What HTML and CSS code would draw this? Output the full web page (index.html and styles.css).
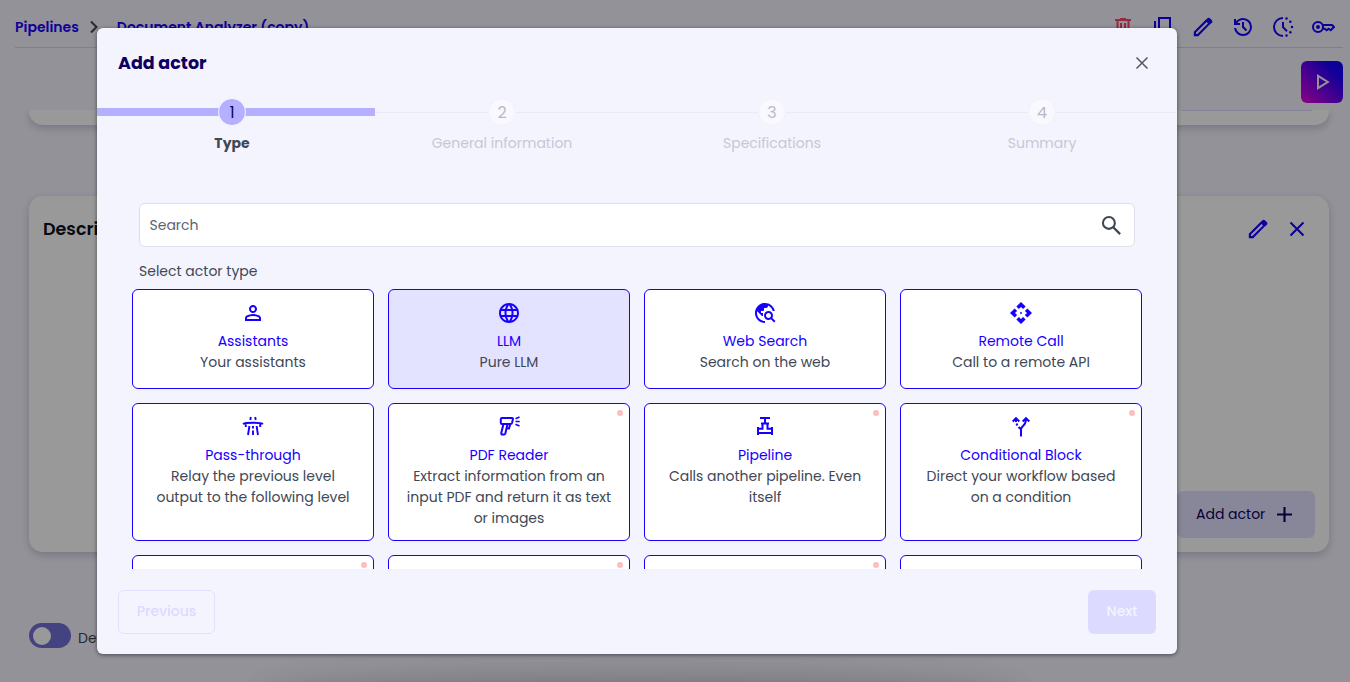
FILE: index.html
```html
<!DOCTYPE html>
<html lang="en">
<head>
<meta charset="utf-8">
<title>Add actor</title>
<link rel="stylesheet" href="styles.css">
</head>
<body>
<svg class="sprite" aria-hidden="true">
  <symbol id="pencil" viewBox="0 0 24 24"><path d="M5 19h1.400l10.600-10.600-1.400-1.400L5 17.600V19ZM18.200 10 7.250 21.200H2.800v-4.450L14 5.600l2.200-2.200q.7-.7 1.500-.7t1.500.7l1.500 1.500q.7.7.7 1.500t-.7 1.500Z"/></symbol>
  <symbol id="close" viewBox="0 0 24 24"><path d="M5.500 5.500l13 13M18.500 5.500l-13 13" fill="none" stroke="currentColor" stroke-width="2"/></symbol>
</svg>
<div class="page">
  <header class="topbar">
    <nav class="crumbs">
      <span>Pipelines</span>
      <svg class="chevron" viewBox="0 0 10 14"><path d="M2 1.500l5.500 5.500L2 12.500" fill="none" stroke="currentColor" stroke-width="2"/></svg>
      <span class="crumb-name">Document Analyzer (copy)</span>
    </nav>
    <div class="tools">
      <svg class="icon danger" viewBox="0 0 24 24"><path d="M4 5h16M9 4h6M6.500 5v15h11V5M10 8v9M14 8v9" fill="none" stroke="currentColor" stroke-width="2"/></svg>
      <svg class="icon" viewBox="0 0 24 24"><path d="M8 3h11v14H8zM4 6v15H16" fill="none" stroke="currentColor" stroke-width="2"/></svg>
      <svg class="icon"><use href="#pencil"/></svg>
      <svg class="icon" viewBox="0 0 24 24"><path d="M12 21q-3.450 0-6.012-2.287Q3.425 16.425 3.050 13H5.100q.35 2.600 2.313 4.300Q9.375 19 12 19q2.925 0 4.963-2.038Q19 14.925 19 12t-2.037-4.963Q14.925 5 12 5q-1.725 0-3.225.8T6.250 8H9v2H3V4h2v2.350q1.275-1.600 3.113-2.475T12 3q3.800 0 6.400 2.600T21 12t-2.600 6.400T12 21Zm2.800-4.800L11 12.400V7h2v4.600l3.200 3.200Z"/></svg>
      <svg class="icon" viewBox="0 0 24 24"><path d="M12 3a9 9 0 0 0 0 18M12 7v5.200l4 4" fill="none" stroke="currentColor" stroke-width="2"/><g><circle cx="15.500" cy="3.500" r="1.250"/><circle cx="19.300" cy="6.800" r="1.250"/><circle cx="21" cy="12" r="1.250"/><circle cx="19.300" cy="17.200" r="1.250"/><circle cx="15.500" cy="20.500" r="1.250"/></g></svg>
      <svg class="icon" viewBox="0 0 24 24"><circle cx="7" cy="12" r="5" fill="none" stroke="currentColor" stroke-width="2"/><circle cx="7" cy="12" r="2"/><path d="M11.500 10h9.500l2 2-3.300 3.300-2-1.500-2 1.500-2-1.500h-2.200" fill="none" stroke="currentColor" stroke-width="2"/></svg>
    </div>
  </header>
  <div class="runbar">
    <button class="run"><svg class="icon" viewBox="0 0 24 24"><path d="M8 5.800v12.400l9.800-6.200z" fill="none" stroke="currentColor" stroke-width="2"/></svg></button>
  </div>
  <div class="panel panel-end"><div class="panel-rule"></div></div>
  <section class="panel panel-main">
    <div class="panel-head">
      <h2>Description</h2>
      <div class="panel-tools"><svg class="icon"><use href="#pencil"/></svg><svg class="icon"><use href="#close"/></svg></div>
    </div>
    <button class="add">Add actor <svg viewBox="0 0 14 14"><path d="M7 0v14M0 7h14" stroke="currentColor" stroke-width="2"/></svg></button>
  </section>
  <div class="toggle-row"><span class="toggle"><span class="knob"></span></span><span class="toggle-text">Debug</span></div>
</div>
<div class="bottom-shade"></div>
<div class="overlay">
  <div class="modal">
    <div class="modal-head">
      <h1>Add actor</h1>
      <svg class="modal-close" viewBox="0 0 14 14"><path d="M1.500 1.500l11 11M12.500 1.500l-11 11" stroke="currentColor" stroke-width="1.500"/></svg>
    </div>
    <ol class="steps">
      <li class="step current"><span class="num">1</span><span class="label">Type</span></li>
      <li class="step"><span class="num">2</span><span class="label">General information</span></li>
      <li class="step"><span class="num">3</span><span class="label">Specifications</span></li>
      <li class="step"><span class="num">4</span><span class="label">Summary</span></li>
    </ol>
    <div class="search"><span>Search</span>
      <svg class="search-icon" viewBox="0 0 24 24"><circle cx="9.500" cy="9.500" r="5.700" fill="none" stroke="currentColor" stroke-width="2"/><path d="M13.700 13.700l6.600 6.600" stroke="currentColor" stroke-width="2.200"/></svg>
    </div>
    <p class="hint">Select actor type</p>
    <div class="list">
      <article class="card"><svg class="icon" viewBox="0 0 24 24"><path d="M12 12q-1.650 0-2.825-1.175T8 8t1.175-2.825T12 4t2.825 1.175T16 8t-1.175 2.825T12 12m-8 8v-2.800q0-.85.438-1.562T5.600 14.550q1.550-.775 3.150-1.162T12 13t3.250.388 3.150 1.162q.725.375 1.163 1.088T20 17.200V20zm2-2h12v-.8q0-.275-.137-.5t-.363-.35q-1.350-.675-2.725-1.012T12 15t-2.775.338T6.500 16.350q-.225.125-.363.350T6 17.200zm6-8q.825 0 1.413-.587T14 8t-.587-1.412T12 6t-1.412.588T10 8t.588 1.413T12 10"/></svg><h3>Assistants</h3><p>Your assistants</p></article>
      <article class="card selected"><svg class="icon" viewBox="0 0 24 24"><path d="M11.990 2C6.470 2 2 6.480 2 12s4.470 10 9.990 10C17.520 22 22 17.520 22 12S17.520 2 11.990 2zm6.930 6h-2.950c-.32-1.250-.78-2.450-1.380-3.560 1.840.63 3.370 1.910 4.330 3.560zM12 4.040c.83 1.200 1.480 2.530 1.910 3.960h-3.820c.43-1.430 1.080-2.760 1.910-3.960zM4.260 14C4.100 13.360 4 12.690 4 12s.1-1.360.26-2h3.380c-.08.66-.14 1.320-.14 2s.06 1.340.14 2H4.260zm.82 2h2.950c.32 1.250.78 2.450 1.380 3.560-1.840-.63-3.370-1.900-4.330-3.560zm2.950-8H5.080c.96-1.660 2.490-2.930 4.330-3.560C8.810 5.550 8.350 6.750 8.030 8zM12 19.960c-.83-1.200-1.480-2.530-1.910-3.960h3.820c-.43 1.430-1.080 2.760-1.910 3.960zM14.340 14H9.660c-.09-.66-.16-1.320-.16-2s.07-1.350.16-2h4.680c.09.65.16 1.320.16 2s-.07 1.340-.16 2zm.25 5.560c.6-1.110 1.060-2.310 1.380-3.560h2.950c-.96 1.650-2.490 2.930-4.330 3.560zM16.360 14c.08-.66.14-1.320.14-2s-.06-1.340-.14-2h3.380c.16.64.26 1.310.26 2s-.1 1.360-.26 2h-3.380z"/></svg><h3>LLM</h3><p>Pure LLM</p></article>
      <article class="card"><svg class="icon" viewBox="0 0 24 24"><path d="M19.300 16.900c.4-.7.7-1.500.7-2.400 0-2.500-2-4.500-4.500-4.500S11 12 11 14.500s2 4.500 4.500 4.500c.9 0 1.700-.3 2.400-.7l3.200 3.200 1.400-1.400-3.200-3.200zm-3.800.1c-1.400 0-2.500-1.100-2.500-2.500s1.100-2.500 2.500-2.500 2.500 1.100 2.500 2.500-1.100 2.500-2.500 2.500zM12 20v2C6.480 22 2 17.520 2 12S6.480 2 12 2c4.840 0 8.870 3.440 9.800 8h-2.070c-.64-2.460-2.400-4.470-4.730-5.410V5c0 1.100-.9 2-2 2h-2v2c0 .55-.45 1-1 1H8v2h2v3H9l-4.790-4.790C4.080 10.790 4 11.380 4 12c0 4.410 3.590 8 8 8z"/></svg><h3>Web Search</h3><p>Search on the web</p></article>
      <article class="card"><svg class="icon" viewBox="0 0 24 24"><path d="M13.200 12L12 13.200 10.800 12 12 10.800zM12 6l2.120 2.120 2.500-2.500L12 1 7.380 5.620l2.500 2.500L12 6zm-6 6l2.120-2.120-2.500-2.500L1 12l4.620 4.620 2.500-2.500L6 12zm12 0l-2.120 2.120 2.500 2.500L23 12l-4.620-4.620-2.500 2.500L18 12zm-6 6l-2.120-2.120-2.500 2.500L12 23l4.620-4.620-2.500-2.500L12 18z"/></svg><h3>Remote Call</h3><p>Call to a remote API</p></article>
      <article class="card"><svg class="icon" viewBox="0 0 24 24"><path d="M9.800 2L9.300 5M14.200 2l.5 3M2 9q2-1.300 10-1.300T22 9M4.800 8.500V12M19.200 8.500V12M8.400 11L7 20M15.600 11L17 20M12 11v2.500M12 15.500V20" fill="none" stroke="currentColor" stroke-width="1.900"/></svg><h3>Pass-through</h3><p>Relay the previous level output to the following level</p></article>
      <article class="card"><i class="dot"></i><svg class="icon" viewBox="0 0 24 24"><path d="M5 3h10q1.200 0 .9 1.200L15 8q-.3 1-1.300 1H5Q3.800 9 3.800 7.800V4.200Q3.800 3 5 3zM6.500 9L4.300 17.800q-.2 1.700 1.200 1.700h1.400q1.200 0 1.500-1.200L10.500 9M10.500 13.500h1.500L13.300 9" fill="none" stroke="currentColor" stroke-width="2"/><path d="M18.500 3.800L22.500 2M18.500 6.500h4.200M18.500 9.200l4 1.800" stroke="currentColor" stroke-width="1.600"/></svg><h3>PDF Reader</h3><p>Extract information from an input PDF and return it as text or images</p></article>
      <article class="card"><i class="dot"></i><svg class="icon" viewBox="0 0 24 24"><path d="M7 3h10M12 3v5M8 8.500h8M9.500 8.500v5.300H5M14.500 8.500v5.300H19M5 12v8M19 12v8M5 18h14" fill="none" stroke="currentColor" stroke-width="2"/></svg><h3>Pipeline</h3><p>Calls another pipeline. Even itself</p></article>
      <article class="card"><i class="dot"></i><svg class="icon" viewBox="0 0 24 24"><path d="M12 21.500v-7Q12 13 13.500 11.500 17 8.500 17 4M13.700 6.500L17 3.200l3.300 3.300M3.700 6.500L7 3.200l3.300 3.300M7 4v3M7.400 8.500l1 2M9.500 12l1.700 1.700" fill="none" stroke="currentColor" stroke-width="2"/></svg><h3>Conditional Block</h3><p>Direct your workflow based on a condition</p></article>
      <article class="card"><i class="dot"></i></article>
      <article class="card"><i class="dot"></i></article>
      <article class="card"><i class="dot"></i></article>
      <article class="card"></article>
    </div>
    <footer class="modal-foot"><button class="prev" disabled>Previous</button><button class="next" disabled>Next</button></footer>
  </div>
</div>
</body>
</html>
```
FILE: styles.css
```css
* { box-sizing: border-box; margin: 0; padding: 0; }
body {
  width: 1350px; height: 682px; overflow: hidden; position: relative;
  background: #f5f4ff; color: #404756;
  font: 400 14px/21px Poppins, Inter, sans-serif;
}
button { font: inherit; border: 0; }
.sprite { position: absolute; width: 0; height: 0; }
.icon { display: block; width: 24px; height: 24px; fill: currentColor; flex: none; }

.page { height: 682px; overflow: hidden; display: flex; flex-direction: column; }
.topbar {
  height: 48px; margin: 0 7px 0 15px; padding-top: 6px; border-bottom: 1px solid #d4d4de;
  display: flex; justify-content: space-between; align-items: center; flex: none; color: #1700ff;
}
.crumbs { display: flex; align-items: center; font-weight: 600; padding-top: 1px; }
.chevron { width: 10px; height: 14px; margin: 0 18px 0 10px; color: #404756; }
.tools { display: flex; gap: 16px; padding-right: 8px; }
.danger { color: #fa4668; }
.runbar { height: 62px; padding: 13px 7px 0; display: flex; justify-content: flex-end; flex: none; }
.run {
  width: 42px; height: 42px; border-radius: 6px; color: #f4f4ff;
  background: linear-gradient(45deg, #e800dc, #1700ff 80%);
  display: flex; align-items: center; justify-content: center;
}
.panel { width: 1300px; margin-left: 29px; background: #fff; flex: none; box-shadow: 0 3px 8px rgba(30, 30, 80, .22); }
.panel-end { height: 15px; border-radius: 0 0 14px 14px; clip-path: inset(0 -15px -15px -15px); }
.panel-rule { margin: 0 17px 0 1152px; border-top: 1px solid #dcdaff; }
.panel-main {
  height: 356px; margin-top: 70.500px; border-radius: 14px; padding: 21.500px 14px 14px;
  display: flex; flex-direction: column; justify-content: space-between; align-items: flex-end;
}
.panel-head { width: 100%; display: flex; justify-content: space-between; align-items: center; color: #0c1020; }
.panel-head h2 { font-size: 17.500px; font-weight: 600; }
.panel-tools { display: flex; gap: 14.500px; padding-right: 6.500px; color: #1700ff; }
.add {
  width: 138px; height: 47px; border-radius: 6px; background: #e3e2ff; color: #0d0060;
  display: flex; align-items: center; gap: 12px; padding-left: 19px;
}
.add svg { width: 15px; height: 15px; }
.toggle-row { margin: 71.500px 0 0 29px; display: flex; gap: 7px; }
.toggle { width: 42px; height: 25px; border-radius: 13px; background: #746fd8; padding: 4px; }
.knob { display: block; width: 18px; height: 18px; border-radius: 50%; background: #fff; }
.toggle-text { padding-top: 5px; }
.bottom-shade {
  position: absolute; left: 265px; top: 696px; width: 750px; height: 20px; border-radius: 50%;
  box-shadow: 0 0 36px 12px rgba(0, 0, 0, .3);
}

.overlay { position: absolute; inset: 0; background: rgba(0, 0, 0, .4); padding: 28px 0 0 97px; }
.modal {
  width: 1080px; height: 626px; border-radius: 6px; background: #f4f4ff;
  box-shadow: 0 1px 4px rgba(0, 0, 0, .5); display: flex; flex-direction: column;
}
.modal-head { height: 70px; padding: 0 28px 0 21px; display: flex; justify-content: space-between; align-items: center; flex: none; }
.modal-head h1 { font-size: 17.500px; font-weight: 700; color: #0d0060; }
.modal-close { width: 14px; height: 14px; color: #505766; }
.steps {
  list-style: none; display: grid; grid-template-columns: repeat(4, 1fr); height: 105px; flex: none;
  background: linear-gradient(#b4b0ff, #b4b0ff) 0 10px / 278px 8px no-repeat,
    linear-gradient(#ebebf5, #ebebf5) 0 14px / 100% 1px no-repeat;
}
.step { display: flex; flex-direction: column; align-items: center; color: #c7c7d4; }
.num {
  width: 28px; height: 28px; border-radius: 50%; border: 1px solid #f1f1fa; background: #f8f8fe;
  display: flex; align-items: center; justify-content: center; font-size: 16px; color: #b8b8c6;
}
.label { margin-top: 7px; }
.current .num { background: #b4b0ff; border-color: #f4f4ff; color: #0d0060; }
.current .label { color: #404756; font-weight: 700; }
.search {
  height: 44px; margin: 0 42px; padding: 0 10.500px 0 9.500px; border: 1px solid #dedfe8; border-radius: 6px;
  background: #fff; color: #5c6272; display: flex; justify-content: space-between; align-items: center; flex: none;
}
.search-icon { width: 25px; height: 25px; color: #404756; }
.hint { margin: 14px 42px 7px; }
.list {
  height: 279.500px; margin: 0 35px; overflow: hidden; flex: none;
  display: grid; grid-template-columns: repeat(4, 242px); grid-template-rows: 100px 138px 138px; gap: 14px;
}
.card {
  position: relative; border: 1px solid #1700ff; border-radius: 6px; background: #fff;
  display: flex; flex-direction: column; align-items: center; text-align: center; padding: 10.500px 17px;
}
.card .icon { color: #1700ff; margin-bottom: 6.500px; }
.card h3 { font-size: 14px; font-weight: 400; color: #1700ff; }
.selected { background: #e3e2ff; }
.dot { position: absolute; top: 6px; right: 6px; width: 6px; height: 6px; border-radius: 50%; background: #ffbdbd; }
.modal-foot { display: flex; justify-content: space-between; padding: 21px 21px 0; }
.prev { width: 97px; height: 44px; border: 1px solid #e3e0ff; border-radius: 6px; background: none; color: #dcdaff; font-weight: 500; }
.next { width: 68px; height: 44px; border-radius: 6px; background: #dcdaff; color: #f4f4ff; font-weight: 500; }
```
